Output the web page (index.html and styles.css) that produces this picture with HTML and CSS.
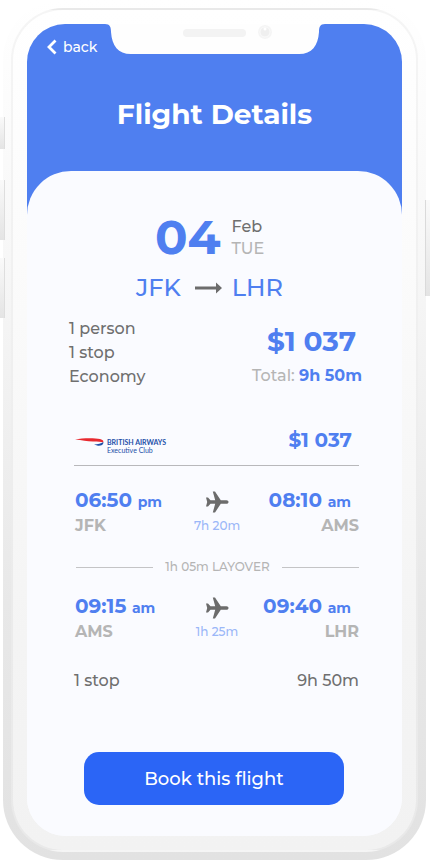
FILE: index.html
```html
<!DOCTYPE html>
<html lang="en">
<head>
<meta charset="utf-8">
<meta name="viewport" content="width=device-width, initial-scale=1">
<title>Flight Details</title>
<link rel="stylesheet" href="styles.css">
</head>
<body>
<svg class="defs" aria-hidden="true">
  <symbol id="plane" viewBox="0 0 24 24">
    <path d="M1 7.500h2L5.500 10.300h4.700L7.800 1.500H10l5.800 8.700h5.700c1.200 0 2 .8 2 1.800s-.8 1.800-2 1.800H15.800L10 22.500H7.800L10.200 13.700H5.500L3 16.500H1L2.200 12z"/>
  </symbol>
</svg>
<div class="phone">
  <span class="key key-mute"></span>
  <span class="key key-up"></span>
  <span class="key key-down"></span>
  <span class="key key-power"></span>
  <div class="bezel">
    <main class="screen">
      <svg class="notch" viewBox="0 0 220 31" aria-hidden="true">
        <path fill="#fefefe" d="M0 0C5 0 6 3 6 8C7 22 13 30 26 30H194C207 30 213 22 214 8C214 3 215 0 220 0z"/>
        <rect x="78" y="5" width="63" height="8" rx="4" fill="#f3f3f3"/>
        <circle cx="160" cy="8" r="7" fill="#f5f5f5"/>
        <circle cx="160" cy="8" r="5" fill="#efefef" stroke="#fafafa"/>
        <circle cx="160" cy="5" r="1.500" fill="#fff"/>
      </svg>
      <header class="header">
        <a class="back" href="#">
          <svg class="chevron" viewBox="0 0 10 16" aria-hidden="true"><path d="M8.500 1.500L2 8l6.500 6.500" fill="none" stroke="#fff" stroke-width="2.800"/></svg>
          back
        </a>
        <h1 class="title">Flight Details</h1>
      </header>
      <div class="sheet">
        <section class="hero">
          <div class="date">
            <span class="day">04</span>
            <div class="month"><div>Feb</div><div class="weekday">TUE</div></div>
          </div>
          <div class="route">
            <span>JFK</span>
            <svg class="arrow" viewBox="0 0 27 12" aria-hidden="true"><path fill="#6c6c6c" d="M0 4.500H21V.5L27 6L21 11.500V7.500H0z"/></svg>
            <span>LHR</span>
          </div>
        </section>
        <section class="summary">
          <div>
            <div>1 person</div>
            <div>1 stop</div>
            <div>Economy</div>
          </div>
          <div class="total">
            <div class="total-price">$1 037</div>
            <div class="total-time">Total: <strong>9h 50m</strong></div>
          </div>
        </section>
        <section class="trip">
          <div class="airline">
            <svg class="logo" viewBox="0 0 94 20" role="img" aria-label="British Airways Executive Club">
              <path fill="#e8292f" d="M0 2.500C8 .8 20 1 25 2C28 2.700 29 4 28 5.500C26 4.500 23 4.500 18 4.500C12 4.500 7 3 0 2.500z"/>
              <path fill="#1d4fa8" d="M19 7.500C23 7.500 26 6.500 28.500 5C28.500 8 26 9 23 8.800z"/>
              <text class="logo-name" x="32" y="8">BRITISH AIRWAYS</text>
              <text class="logo-club" x="32" y="16">Executive Club</text>
            </svg>
            <span class="fare">$1 037</span>
          </div>
          <div class="leg">
            <div><div class="time">06:50 <small>pm</small></div><div class="code">JFK</div></div>
            <div class="flight"><svg class="plane" aria-hidden="true"><use href="#plane"/></svg><div class="duration">7h 20m</div></div>
            <div class="arrival"><div class="time">08:10 <small>am</small></div><div class="code">AMS</div></div>
          </div>
          <div class="layover">1h 05m LAYOVER</div>
          <div class="leg">
            <div><div class="time">09:15 <small>am</small></div><div class="code">AMS</div></div>
            <div class="flight"><svg class="plane" aria-hidden="true"><use href="#plane"/></svg><div class="duration">1h 25m</div></div>
            <div class="arrival"><div class="time">09:40 <small>am</small></div><div class="code">LHR</div></div>
          </div>
          <div class="overall"><span>1 stop</span><span>9h 50m</span></div>
        </section>
        <button class="book" type="button">Book this flight</button>
      </div>
    </main>
  </div>
</div>
</body>
</html>
```
FILE: styles.css
```css
* { box-sizing: border-box; }

body {
  margin: 0;
  background: #fff;
  color: #6f6f6f;
  font: 500 16px/24px Montserrat, Inter, sans-serif;
}

svg { display: block; }
.defs { position: absolute; width: 0; height: 0; }

.phone {
  position: relative;
  margin: 0 4px 4px 3px;
  padding: 8px;
  border-radius: 60px;
  background: linear-gradient(#fff, #f7f7f7 30%, #e8e8e8 70%, #e2e2e2);
}

.bezel {
  padding: 14px;
  border: 2px solid rgba(140, 140, 140, 0.09);
  border-radius: 52px;
  background: linear-gradient(#fff, #fbfbfb 30%, #f4f4f4 75%, #f2f2f2);
}

.key {
  position: absolute;
  left: -3px;
  width: 5px;
  height: 60px;
  border-right: 1px solid #dedede;
  background: linear-gradient(#fafafa, #e4e4e4);
}
.key-mute { top: 117px; height: 32px; }
.key-up { top: 180px; }
.key-down { top: 258px; }
.key-power {
  top: 200px;
  right: -4px;
  left: auto;
  height: 96px;
  border-right: 0;
  border-left: 1px solid #dadada;
}

.screen {
  position: relative;
  overflow: hidden;
  border-radius: 38px;
  background: linear-gradient(#4f7ff0 50%, #fafbff 50%);
}

.notch {
  position: absolute;
  top: 0;
  left: 50%;
  width: 220px;
  height: 31px;
  transform: translateX(-50%);
}

.header { padding: 11px 20px 37px; color: #fff; }
.back {
  display: flex;
  align-items: center;
  gap: 6px;
  width: fit-content;
  color: inherit;
  font-size: 14px;
  text-decoration: none;
}
.chevron { width: 10px; height: 16px; }
.title {
  margin: 35px 0 0;
  font-size: 28px;
  line-height: 40px;
  text-align: center;
}

.sheet {
  padding: 41px 40px 31px 42px;
  border-radius: 44px 44px 0 0;
  background: #fafbff;
}

.hero { padding-right: 12px; }
.date {
  display: flex;
  justify-content: center;
  align-items: center;
  gap: 11px;
}
.day {
  color: #4f7ff0;
  font-size: 48px;
  font-weight: 700;
  line-height: 50px;
}
.month { padding-top: 2px; line-height: 22px; }
.weekday { color: #b5b5b5; }
.route {
  display: flex;
  justify-content: center;
  align-items: center;
  margin-top: 10px;
  color: #4f7ff0;
  font-size: 24px;
  line-height: 32px;
}
.arrow { width: 27px; height: 12px; margin: 0 10px 0 14px; }

.summary {
  display: flex;
  justify-content: space-between;
  margin-top: 13px;
}
.total { padding-top: 6px; text-align: right; }
.total-price {
  padding-right: 6px;
  color: #4f7ff0;
  font-size: 28px;
  font-weight: 700;
  line-height: 36px;
}
.total-time { color: #b5b5b5; line-height: 34px; }
.total-time strong { color: #4f7ff0; }

.trip { padding: 0 3px 0 5px; }
.airline {
  display: flex;
  justify-content: space-between;
  align-items: flex-start;
  margin-top: 35px;
  padding: 0 7px 8px 1px;
  border-bottom: 1px solid #b8b8bb;
}
.logo { width: 94px; height: 20px; margin-top: 9px; }
.logo-name { fill: #1d4fa8; font: 700 7px Lato, sans-serif; }
.logo-club { fill: #1d4fa8; font: 7px Lato, sans-serif; }
.fare { color: #4f7ff0; font-size: 20px; font-weight: 700; }

.leg {
  display: grid;
  grid-template-columns: 1fr auto 1fr;
  padding-left: 1px;
}
.airline + .leg { margin-top: 22px; }
.time {
  color: #4f7ff0;
  font-size: 20px;
  font-weight: 700;
}
.time small { font-size: 14px; }
.code { color: #b5b5b5; font-weight: 700; }
.flight { padding-top: 2px; text-align: center; }
.plane { width: 24px; height: 24px; margin: 0 auto; fill: #6c6c6c; }
.duration { color: #9bb7f8; font-size: 12px; }
.arrival { text-align: right; }
.arrival .time { padding-right: 8px; }

.layover {
  display: flex;
  align-items: center;
  gap: 12px;
  margin: 17px 0 15px 2px;
  color: #b5b5b5;
  font-size: 12px;
}
.layover::before,
.layover::after {
  flex: 1;
  height: 1px;
  background: #c4c4c6;
  content: "";
}

.overall {
  display: flex;
  justify-content: space-between;
  margin-top: 25px;
}

.book {
  display: block;
  width: calc(100% - 33px);
  height: 53px;
  margin: 59px 0 0 15px;
  border: 0;
  border-radius: 15px;
  background: #2b65f6;
  color: #fff;
  font: 500 18px/24px Montserrat, Inter, sans-serif;
}
```
